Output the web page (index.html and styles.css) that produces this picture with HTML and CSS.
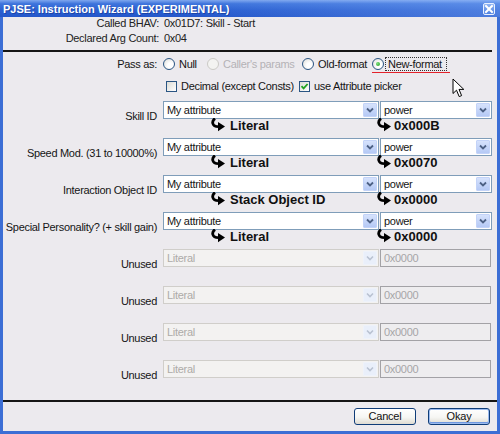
FILE: index.html
```html
<!DOCTYPE html>
<html>
<head>
<meta charset="utf-8">
<title>PJSE: Instruction Wizard</title>
<link rel="stylesheet" href="styles.css">
</head>
<body>
<div class="window">
  <div class="titlebar">
    <span class="title">PJSE: Instruction Wizard (EXPERIMENTAL)</span>
    <span class="close"><svg width="10" height="10" viewBox="0 0 10 10"><path d="M2 2 L8 8 M8 2 L2 8" stroke="#fff" stroke-width="2" stroke-linecap="square"/></svg></span>
  </div>
  <div class="frame">
    <div class="info">
      <span class="key">Called BHAV:</span><span>0x01D7: Skill - Start</span>
      <span class="key">Declared Arg Count:</span><span>0x04</span>
    </div>
    <div class="rule"></div>

    <div class="form">
      <div class="row">
        <div class="label">Pass as:</div>
        <div class="options">
          <span class="opt w-null"><span class="radio"></span>Null</span>
          <span class="opt w-caller disabled"><span class="radio"></span>Caller's params</span>
          <span class="opt w-old"><span class="radio"></span>Old-format</span>
          <span class="opt new"><span class="radio checked"></span><span class="focus">New-format</span></span>
        </div>
      </div>
      <div class="row checks">
        <div class="label"></div>
        <div class="options">
          <span class="opt w-decimal"><span class="check"></span>Decimal (except Consts)</span>
          <span class="opt"><span class="check on"><svg width="9" height="9" viewBox="0 0 9 9"><path d="M1.5 4.2 L3.6 6.4 L7.6 2" fill="none" stroke="#21A121" stroke-width="1.8"/></svg></span>use Attribute picker</span>
        </div>
      </div>

      <div class="param">
        <div class="label">Skill ID</div>
        <div class="combo main"><span class="val">My attribute</span><span class="drop"></span></div>
        <div class="combo"><span class="val">power</span><span class="drop"></span></div>
        <div class="flow left"><span class="turn"></span>Literal</div>
        <div class="flow right"><span class="turn"></span>0x000B</div>
      </div>
      <div class="param">
        <div class="label">Speed Mod. (31 to 10000%)</div>
        <div class="combo main"><span class="val">My attribute</span><span class="drop"></span></div>
        <div class="combo"><span class="val">power</span><span class="drop"></span></div>
        <div class="flow left"><span class="turn"></span>Literal</div>
        <div class="flow right"><span class="turn"></span>0x0070</div>
      </div>
      <div class="param">
        <div class="label">Interaction Object ID</div>
        <div class="combo main"><span class="val">My attribute</span><span class="drop"></span></div>
        <div class="combo"><span class="val">power</span><span class="drop"></span></div>
        <div class="flow left"><span class="turn"></span>Stack Object ID</div>
        <div class="flow right"><span class="turn"></span>0x0000</div>
      </div>
      <div class="param">
        <div class="label">Special Personality? (+ skill gain)</div>
        <div class="combo main"><span class="val">My attribute</span><span class="drop"></span></div>
        <div class="combo"><span class="val">power</span><span class="drop"></span></div>
        <div class="flow left"><span class="turn"></span>Literal</div>
        <div class="flow right"><span class="turn"></span>0x0000</div>
      </div>

      <div class="param unused">
        <div class="label">Unused</div>
        <div class="combo main off"><span class="val">Literal</span><span class="drop"></span></div>
        <div class="field off">0x0000</div>
      </div>
      <div class="param unused">
        <div class="label">Unused</div>
        <div class="combo main off"><span class="val">Literal</span><span class="drop"></span></div>
        <div class="field off">0x0000</div>
      </div>
      <div class="param unused">
        <div class="label">Unused</div>
        <div class="combo main off"><span class="val">Literal</span><span class="drop"></span></div>
        <div class="field off">0x0000</div>
      </div>
      <div class="param unused">
        <div class="label">Unused</div>
        <div class="combo main off"><span class="val">Literal</span><span class="drop"></span></div>
        <div class="field off">0x0000</div>
      </div>
    </div>

    <div class="rule bottom"></div>
    <div class="buttons">
      <button class="btn">Cancel</button>
      <button class="btn default">Okay</button>
    </div>
  </div>

  <svg class="pointer" width="13" height="20" viewBox="0 0 13 20">
    <path d="M1 1 L1 15.5 L4.5 12.2 L7.2 18.6 L9.6 17.6 L7 11.4 L11.8 11.4 Z" fill="#fff" stroke="#000" stroke-width="1" stroke-linejoin="miter"/>
  </svg>
</div>
</body>
</html>
```

FILE: styles.css
```css
* {
  box-sizing: border-box;
}

html,
body {
  margin: 0;
  padding: 0;
}

body {
  width: 500px;
  height: 434px;
  overflow: hidden;
  font-family: "Liberation Sans", Arial, sans-serif;
  font-size: 11px;
  letter-spacing: -0.3px;
  color: #151515;
  background: #ECEAEE;
}

.window {
  position: relative;
  width: 500px;
  height: 434px;
  display: flex;
  flex-direction: column;
}

/* ---- caption ---- */
.titlebar {
  flex: none;
  height: 17px;
  display: flex;
  align-items: center;
  justify-content: space-between;
  padding: 0 5px 0 3px;
  background:
    linear-gradient(to right, rgba(255, 255, 255, 0) 40%, rgba(150, 190, 255, 0.35) 100%),
    linear-gradient(to bottom, #7FA7EE 0%, #3E74DC 22%, #2B60D1 60%, #2457CA 100%);
}

.title {
  color: #fff;
  font-weight: bold;
  font-size: 11px;
  letter-spacing: 0;
  text-shadow: 1px 1px 0 rgba(20, 50, 140, 0.6);
}

.close {
  width: 12px;
  height: 12px;
  display: flex;
  align-items: center;
  justify-content: center;
  border: 1px solid #E8F0FF;
  border-radius: 2px;
  background: linear-gradient(#8FB3F2, #4F82E2);
}

/* ---- client area ---- */
.frame {
  flex: 1;
  display: flex;
  flex-direction: column;
  border: 3px solid #3C6ED5;
  border-top: none;
  background: #ECEAEE;
}

.info {
  display: grid;
  grid-template-columns: 156px auto;
  column-gap: 5px;
  row-gap: 3px;
  line-height: 12px;
  color: #222;
}

.info .key {
  text-align: right;
}

.rule {
  height: 2px;
  margin: 6px 5px 0 0;
  background: #161616;
}

.rule.bottom {
  margin: 3px 0 0 0;
}

.form {
  display: flex;
  flex-direction: column;
  margin-top: 5px;
}

.row,
.param {
  display: grid;
  grid-template-columns: 160px 217px 112px;
}

.row {
  height: 14px;
  line-height: 14px;
}

.row.checks {
  margin-top: 8px;
  margin-bottom: 8px;
}

.label {
  display: flex;
  justify-content: flex-end;
  white-space: nowrap;
  padding-right: 6px;
}

.options {
  grid-column: 2 / 4;
  display: flex;
  align-items: center;
}

.opt {
  position: relative;
  display: inline-flex;
  align-items: center;
  gap: 4px;
  white-space: nowrap;
}

.w-null { width: 44px; }
.w-caller { width: 95px; }
.w-old { width: 70px; }
.w-decimal { width: 133px; margin-left: 3px; }

.opt.disabled {
  color: #B4B2B6;
}

.opt.new {
  gap: 1px;
}

.opt.new::after {
  content: "";
  position: absolute;
  left: 0;
  right: -3px;
  bottom: -2px;
  height: 1.5px;
  background: #E3222B;
}

.focus {
  padding: 0 4px 0 2px;
  line-height: 12px;
  border: 1px dotted #333;
}

/* radio buttons and check boxes */
.radio {
  flex: none;
  width: 12px;
  height: 12px;
  border-radius: 50%;
  border: 1px solid #2A5583;
  background: radial-gradient(circle at 65% 65%, #FFFFFF 30%, #D9D9D4 100%);
  display: flex;
  align-items: center;
  justify-content: center;
}

.disabled .radio {
  border-color: #CBCAC6;
  background: #F3F3F1;
}

.radio.checked::before {
  content: "";
  width: 4px;
  height: 4px;
  border-radius: 50%;
  background: radial-gradient(circle at 35% 35%, #7EE07E, #1D9A1D);
}

.check {
  flex: none;
  width: 11px;
  height: 11px;
  border: 1px solid #2A5583;
  background: linear-gradient(135deg, #DCDCD6, #FFFFFF);
  display: flex;
  align-items: center;
  justify-content: center;
}

/* parameter rows */
.param {
  grid-template-rows: 18px 19px;
}

.param .label {
  grid-row: 1 / 3;
  padding-top: 9px;
  line-height: 13px;
}

.combo {
  height: 18px;
  display: flex;
  align-items: center;
  border: 1px solid #7F9DB9;
  background: #fff;
}

.combo.main {
  margin-right: 1px;
}

.combo .val {
  flex: 1;
  padding-left: 3px;
  white-space: nowrap;
  overflow: hidden;
}

.drop {
  flex: none;
  width: 14px;
  height: 14px;
  margin-right: 1px;
  border: 1px solid #C3D3F8;
  border-radius: 1px;
  background:
    url("data:image/svg+xml,%3Csvg xmlns='http://www.w3.org/2000/svg' width='12' height='12'%3E%3Cpath d='M3 4.5 L6 7.5 L9 4.5' fill='none' stroke='%234D6185' stroke-width='1.8'/%3E%3C/svg%3E") center / 12px 12px no-repeat,
    linear-gradient(#D6E2FC, #B5C9F5);
}

.combo.off {
  border-color: #D0CECA;
  background: #F3F2F1;
  color: #ADABA8;
}

.combo.off .drop {
  border-color: #EEF2FA;
  background:
    url("data:image/svg+xml,%3Csvg xmlns='http://www.w3.org/2000/svg' width='12' height='12'%3E%3Cpath d='M3 4.5 L6 7.5 L9 4.5' fill='none' stroke='%23B9C2D2' stroke-width='1.6'/%3E%3C/svg%3E") center / 12px 12px no-repeat,
    #E9EFFA;
}

.field {
  height: 18px;
  line-height: 16px;
  padding-left: 3px;
  border: 1px solid #A3A2A6;
}

.field.off {
  margin-right: 1px;
  background: #EEEDEF;
  color: #A6A5A8;
}

/* resolved value under each combo */
.flow {
  display: flex;
  align-items: flex-start;
  font-size: 13px;
  font-weight: bold;
  letter-spacing: 0;
  line-height: 13px;
  color: #111;
  white-space: nowrap;
}

.flow.left {
  grid-column: 2;
  padding-left: 47px;
  gap: 5px;
}

.flow.right {
  grid-column: 3;
  margin-left: -4px;
  gap: 3px;
}

.turn {
  flex: none;
  width: 15px;
  height: 14px;
  margin-top: -1px;
  background: url("data:image/svg+xml,%3Csvg xmlns='http://www.w3.org/2000/svg' width='15' height='14' viewBox='0 0 15 14'%3E%3Cpath d='M5 0.5 C1.6 3 1.4 8.6 8.6 8.6' fill='none' stroke='%23000' stroke-width='2.8'/%3E%3Cpath d='M8 4 L15 8.6 L8 13.2 Z' fill='%23000'/%3E%3C/svg%3E") no-repeat;
}

/* dialog buttons */
.buttons {
  display: flex;
  justify-content: flex-end;
  gap: 12px;
  margin-top: 6px;
  padding-right: 7px;
}

.btn {
  width: 62px;
  height: 17px;
  padding: 0;
  font-family: inherit;
  font-size: 11px;
  letter-spacing: -0.2px;
  line-height: 15px;
  color: #111;
  border: 1px solid #0F3C78;
  border-radius: 3px;
  background: linear-gradient(#FFFFFF 0%, #F6F6F3 55%, #DEDBD2 100%);
}

.btn.default {
  box-shadow: inset 0 0 0 1px #9CBBEF, inset 0 -1px 0 1px #6E97E0;
}

.pointer {
  position: absolute;
  left: 452px;
  top: 78px;
}
```
